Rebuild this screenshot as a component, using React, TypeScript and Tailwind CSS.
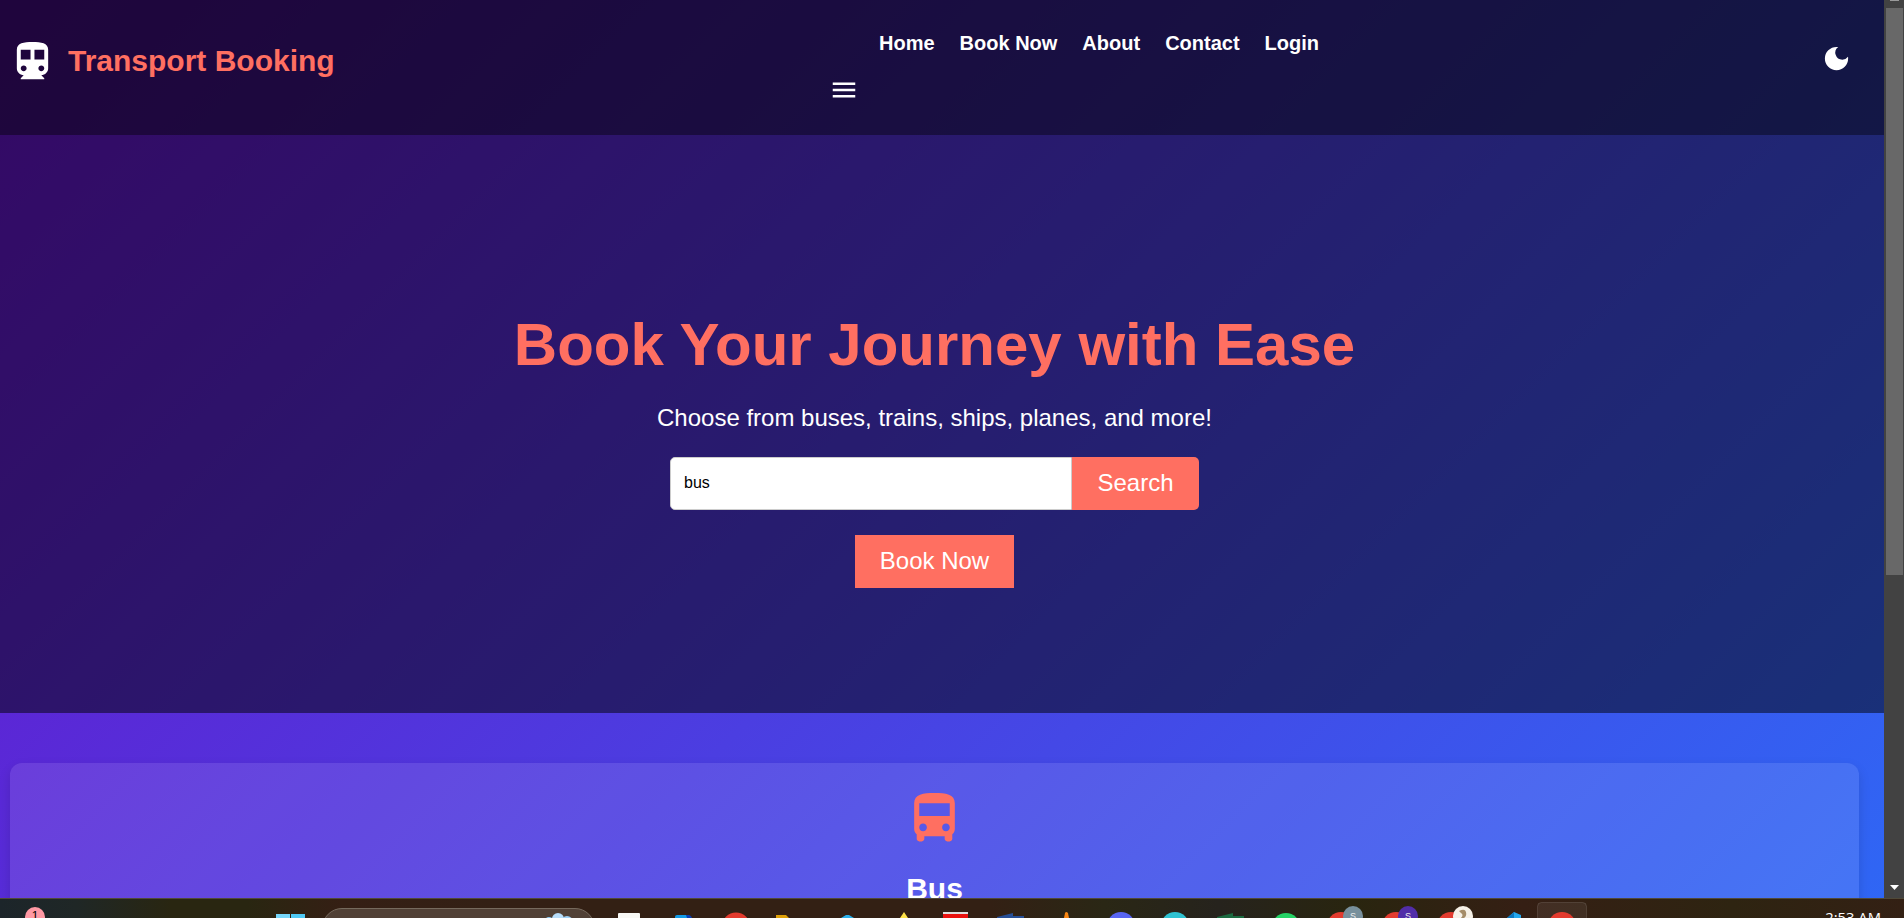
import { MdDarkMode, MdDirectionsBus, MdDirectionsTransit, MdMenu } from "react-icons/md";
import type { ReactNode } from "react";

const links = ["Home", "Book Now", "About", "Contact", "Login"];

const apps: { name: string; art: ReactNode }[] = [
  { name: "notes", art: <rect x="16" y="15" width="22" height="8" rx="1" fill="#f8f8f5" /> },
  { name: "store", art: <><path d="M18 20v-1q0-2 2-2h10q3 0 4 3z" fill="#139be6" /><path d="M29 17h2q3 0 4 3h-5z" fill="#0a3fb5" /></> },
  { name: "browser", art: <circle cx="24" cy="28.500" r="14" fill="#e33b2e" /> },
  { name: "files", art: <path d="M9 20v-3h10l3 3z" fill="#dfa008" /> },
  { name: "editor", art: <path d="M20 20l5-3h3l5 3z" fill="#2bb1ec" /> },
  { name: "drive", art: <path d="M24 20l4-6 4 6z" fill="#ffe24a" /> },
  { name: "reader", art: <><rect x="12" y="14" width="25" height="6" fill="#e9110e" /><rect x="12" y="14" width="25" height="2" fill="#ddd" /></> },
  { name: "writer", art: <path d="M11 19l16-4v3h11v2H11z" fill="#274f96" /> },
  { name: "player", art: <path d="M23 20l1-5q1-2 3 0l1 5z" fill="#f98612" /> },
  { name: "chat", art: <circle cx="25" cy="28" r="14" fill="#5865f2" /> },
  { name: "design", art: <circle cx="25" cy="28" r="14" fill="#2fc3d2" /> },
  { name: "sheets", art: <path d="M12 19l16-4v3h11v2H12z" fill="#1c6b41" /> },
  { name: "calls", art: <circle cx="26" cy="29" r="14" fill="#25d366" /> },
  { name: "profile-a", art: <><circle cx="26" cy="28" r="14" fill="#e33b2e" /><circle cx="38" cy="18" r="10" fill="#78909c" /><text x="38" y="21" textAnchor="middle" fontSize="9" fill="#eee">S</text></> },
  { name: "profile-b", art: <><circle cx="26" cy="28" r="14" fill="#e33b2e" /><circle cx="38" cy="18" r="10" fill="#512da8" /><text x="38" y="21" textAnchor="middle" fontSize="9" fill="#eee">S</text></> },
  { name: "profile-c", art: <><circle cx="26" cy="28" r="14" fill="#e33b2e" /><circle cx="38" cy="18" r="10" fill="#f6f1e7" /><path d="M34 13q6-3 7 1t-2 6h-3q3-3 0-5z" fill="#a58c67" /></> },
  { name: "code", art: <><path d="M27 20l7-6 7 3v3z" fill="#24a8ee" /><path d="M27 20l7-6v6z" fill="#0d78c0" /></> },
  { name: "active", art: <><rect x="3.500" y="4.500" width="49" height="40" rx="4" fill="#ffffff12" stroke="#ffffff20" /><circle cx="28" cy="28" r="14" fill="#e33b2e" /></> },
];

function Header() {
  return (
    <header className="flex h-[135px] items-start bg-black/70 text-white">
      <div className="flex h-[121px] w-[832px] items-center pl-[9px]">
        <MdDirectionsTransit size={47} className="mt-[2px]" />
        <h1 className="ml-[12px] text-[30px] font-bold text-[#ff6f61]">Transport Booking</h1>
      </div>
      <div className="flex flex-1 flex-col">
        <nav className="ml-[47px] mt-[31px] flex h-6 gap-[25px] text-[20px] leading-6 font-bold">
          {links.map((link) => (
            <a key={link}>{link}</a>
          ))}
        </nav>
        <MdMenu size={30} className="ml-[-3px] mt-[20px]" />
      </div>
      <MdDarkMode size={31} className="mr-[32px] mt-[43px]" />
    </header>
  );
}

function Hero() {
  return (
    <section className="flex h-[578px] flex-col items-center bg-black/50 pr-[15px] pt-[175px] text-white">
      <h2 className="h-[69px] text-[60px] leading-[69px] font-bold text-[#ff6f61]">Book Your Journey with Ease</h2>
      <p className="mt-[25px] h-7 text-[24px] leading-7">Choose from buses, trains, ships, planes, and more!</p>
      <div className="mt-[25px] flex h-[53px]">
        <input
          defaultValue="bus"
          className="w-[402px] rounded-l-[5px] border border-[#cccccc] bg-white pr-3 pb-[2px] pl-[13px] text-[16px] text-black outline-none"
        />
        <button className="w-[127px] rounded-r-[5px] bg-[#ff6f61] pb-[2px] text-[24px]">Search</button>
      </div>
      <button className="mt-[25px] h-[53px] w-[159px] bg-[#ff6f61] pb-[2px] text-[24px]">Book Now</button>
    </section>
  );
}

function Services() {
  return (
    <section className="pl-[10px] pr-[25px] pt-[50px]">
      <div className="flex h-[300px] flex-col items-center rounded-[12px] bg-white/10 pt-[25px] shadow-[0_5px_12px_rgba(0,0,0,0.13)]">
        <MdDirectionsBus size={61} className="text-[#ff6f61]" />
        <h3 className="mt-[22px] text-[30px] leading-[36px] font-bold text-white">Bus</h3>
      </div>
    </section>
  );
}

function Scrollbar() {
  return (
    <div className="flex w-5 flex-col items-center bg-[#424242]">
      <div className="h-px w-[9px] bg-[#9a9a9a]" />
      <div className="mt-[7px] ml-px h-[567px] w-[17px] bg-[#686868]" />
      <svg width="9" height="5" viewBox="0 0 9 5" className="mt-auto mb-[8px]">
        <path d="M0 0h9L4.500 5z" fill="#fff" />
      </svg>
    </div>
  );
}

function Taskbar() {
  return (
    <footer className="flex h-5 overflow-hidden border-t border-[#504938] bg-[linear-gradient(90deg,#1c252a_0%,#1f2726_4%,#292611_9%,#292611_13%,#351f14_18%,#332014_26%,#332014_52%,#2a2715_58%,#26231d_64%,#29250f_71%,#351f14_80%,#2e2411_91%,#332014_100%)]">
      <div className="flex w-[276px] pl-[25px]">
        <span className="mt-[8px] flex size-5 shrink-0 justify-center rounded-full bg-[#ff99a4] text-[12px] leading-[19px] text-black">1</span>
      </div>
      <div className="mt-[15px] flex w-[46px] gap-px">
        <i className="h-5 w-[14px] bg-[#77d7fa]" />
        <i className="h-5 w-[14px] bg-[#4fcaf5]" />
      </div>
      <div className="mt-[9px] flex h-10 w-[273px] shrink-0 justify-end rounded-full border border-[#766a5d] bg-[#514136] pr-[21px]">
        <svg width="28" height="10" viewBox="0 0 28 10" className="mt-[4px]">
          <circle cx="13" cy="6" r="6" fill="#b8defa" />
          <circle cx="4" cy="9" r="5" fill="#8ecdf8" />
          <circle cx="22" cy="9" r="6" fill="#9ed1f7" />
        </svg>
      </div>
      <div className="ml-[7px] flex">
        {apps.map((app) => (
          <svg key={app.name} width="54.85" height="19" viewBox="0 1 54.85 19" className="shrink-0">
            {app.art}
          </svg>
        ))}
      </div>
      <span className="ml-auto mr-[23px] mt-[8px] font-['Open_Sans',sans-serif] text-[14.800px] leading-5 whitespace-nowrap text-white">2:53 AM</span>
    </footer>
  );
}

export default function App() {
  return (
    <div className="flex h-[918px] w-[1904px] flex-col overflow-hidden font-['Liberation_Sans',Arial,sans-serif]">
      <div className="flex h-[898px] shrink-0 overflow-hidden">
        <main className="h-[1384px] w-[1884px] shrink-0 bg-[linear-gradient(135deg,#6a11cb,#2575fc)]">
          <Header />
          <Hero />
          <Services />
        </main>
        <Scrollbar />
      </div>
      <Taskbar />
    </div>
  );
}
